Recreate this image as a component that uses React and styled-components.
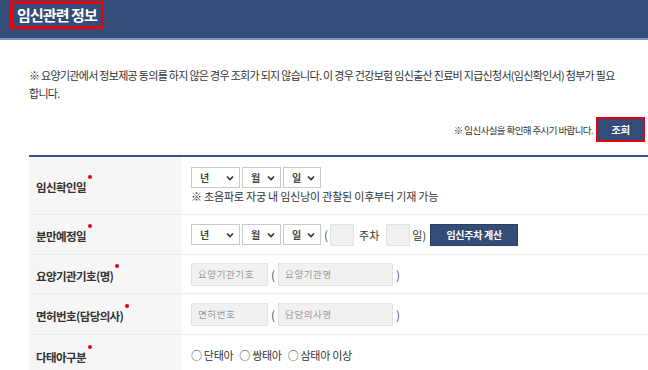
import React from 'react';
import styled, { createGlobalStyle } from 'styled-components';

const GlobalStyle = createGlobalStyle`
  body {
    margin: 0;
    background: #fff;
    font-family: "Noto Sans CJK KR", "Noto Sans", sans-serif;
    color: #333;
  }
`;

const Page = styled.div`
  width: 648px;
  height: 370px;
  overflow: hidden;
`;

const Header = styled.div`
  height: 40px;
  box-sizing: border-box;
  background: #344c78;
  border-bottom: 2px solid #8494b6;
  padding: 1px 0 0 10px;
`;

const Title = styled.h2`
  display: inline-block;
  margin: 0;
  padding: 2px 4px;
  border: 3px solid #e8000b;
  color: #fff;
  font-size: 15px;
  line-height: 18px;
  font-weight: 700;
  letter-spacing: -0.9px;
`;

const Body = styled.div`
  padding: 26px 0 0 29px;
`;

const Notice = styled.p`
  margin: 0;
  width: 600px;
  font-size: 11px;
  line-height: 18px;
  letter-spacing: -0.7px;
  word-break: keep-all;
  color: #333;
`;

const CheckRow = styled.div`
  display: flex;
  justify-content: flex-end;
  align-items: center;
  gap: 3px;
  margin-top: 15px;
  padding-right: 3px;
`;

const CheckNote = styled.span`
  font-size: 9.5px;
  letter-spacing: -0.6px;
  color: #333;
`;

const NavyButton = styled.button`
  font-family: inherit;
  background: #344c78;
  color: #fff;
  font-weight: 700;
  font-size: ${p => p.$small ? '10px' : '10.5px'};
  letter-spacing: -0.3px;
  border: ${p => p.$marked ? '2px solid #e8000b' : '1px solid #2b3f66'};
  width: ${p => p.$w}px;
  height: ${p => p.$h}px;
  margin-left: ${p => p.$ml || 0}px;
  padding: 0;
  cursor: pointer;
`;

const Table = styled.div`
  margin-top: 13px;
  border-top: 2px solid #3a5282;
`;

const Row = styled.div`
  display: grid;
  grid-template-columns: 153px 1fr;
  border-bottom: 1px solid #ececec;
  min-height: ${p => p.$h}px;
`;

const Label = styled.div`
  background: #f6f6f6;
  display: flex;
  align-items: center;
  padding: 3px 0 0 7px;
  font-size: 11.5px;
  font-weight: 700;
  letter-spacing: -0.6px;
  color: #333;
`;

const Dot = styled.span`
  width: 4px;
  height: 4px;
  border-radius: 50%;
  background: #e8000b;
  margin: 0 0 20px 2px;
`;

const Cell = styled.div`
  display: flex;
  flex-direction: column;
  justify-content: center;
  padding-left: 9px;
  gap: 1px;
`;

const Line = styled.div`
  display: flex;
  align-items: center;
  gap: 2px;
  font-size: 11px;
  color: #333;
`;

const Unit = styled.span`
  margin: ${p => p.$m || '0'};
`;

const SelectBox = styled.div`
  width: ${p => p.$w}px;
  height: 21px;
  box-sizing: border-box;
  border: 1px solid #c9c9c9;
  background: #fff;
  display: flex;
  align-items: center;
  justify-content: space-between;
  padding: 0 5px 0 8px;
  font-size: 10px;
  font-weight: 700;
  color: #444;
`;

const Hint = styled.div`
  font-size: 11px;
  letter-spacing: -0.2px;
  color: #333;
  line-height: 15px;
`;

const Field = styled.div`
  width: ${p => p.$w}px;
  height: ${p => p.$h || 23}px;
  box-sizing: border-box;
  background: #f1f1f1;
  border: 1px solid #e3e3e3;
  display: flex;
  align-items: center;
  padding-left: 6px;
  font-size: 9.5px;
  letter-spacing: 0.6px;
  color: #9a9a9a;
`;

const Paren = styled.span`
  font-size: 12px;
  color: #555;
  margin: ${p => p.$m || '0 1px'};
`;

const Radios = styled.div`
  display: flex;
  gap: 6px;
  font-size: 11px;
  letter-spacing: -0.3px;
  color: #333;
`;

const Chevron = () => (
  <svg width="8" height="6" viewBox="0 0 8 6">
    <path d="M1 1.5 L4 4.5 L7 1.5" fill="none" stroke="#333" strokeWidth="1.6" />
  </svg>
);

const DateSelects = () => (
  <>
    <SelectBox $w={49}>년<Chevron /></SelectBox>
    <SelectBox $w={39}>월<Chevron /></SelectBox>
    <SelectBox $w={38}>일<Chevron /></SelectBox>
  </>
);

const FieldLabel = ({ children }) => (
  <Label>
    {children}
    <Dot />
  </Label>
);

export default function App() {
  return (
    <Page>
      <GlobalStyle />
      <Header>
        <Title>임신관련 정보</Title>
      </Header>
      <Body>
        <Notice>
          ※ 요양기관에서 정보제공 동의를 하지 않은 경우 조회가 되지 않습니다. 이 경우 건강보험 임신출산 진료비 지급신청서(임신확인서) 첨부가 필요 합니다.
        </Notice>
        <CheckRow>
          <CheckNote>※ 임신사실을 확인해 주시기 바랍니다.</CheckNote>
          <NavyButton $marked $w={49} $h={25}>조회</NavyButton>
        </CheckRow>
        <Table>
          <Row $h={57}>
            <FieldLabel>임신확인일</FieldLabel>
            <Cell>
              <Line><DateSelects /></Line>
              <Hint>※ 초음파로 자궁 내 임신낭이 관찰된 이후부터 기재 가능</Hint>
            </Cell>
          </Row>
          <Row $h={39}>
            <FieldLabel>분만예정일</FieldLabel>
            <Cell>
              <Line>
                <DateSelects />
                <Paren $m="0 0 0 1px">(</Paren>
                <Field $w={24} $h={22} />
                <Unit $m="0 5px 0 3px">주차</Unit>
                <Field $w={24} $h={22} />
                <Unit>일)</Unit>
                <NavyButton $small $w={88} $h={22} $ml={2}>임신주차 계산</NavyButton>
              </Line>
            </Cell>
          </Row>
          <Row $h={38}>
            <FieldLabel>요양기관기호(명)</FieldLabel>
            <Cell>
              <Line>
                <Field $w={77}>요양기관기호</Field>
                <Paren>(</Paren>
                <Field $w={115}>요양기관명</Field>
                <Paren>)</Paren>
              </Line>
            </Cell>
          </Row>
          <Row $h={40}>
            <FieldLabel>면허번호(담당의사)</FieldLabel>
            <Cell>
              <Line>
                <Field $w={77}>면허번호</Field>
                <Paren>(</Paren>
                <Field $w={115}>담당의사명</Field>
                <Paren>)</Paren>
              </Line>
            </Cell>
          </Row>
          <Row $h={40}>
            <FieldLabel>다태아구분</FieldLabel>
            <Cell>
              <Radios>
                <span>○ 단태아</span>
                <span>○ 쌍태아</span>
                <span>○ 삼태아 이상</span>
              </Radios>
            </Cell>
          </Row>
        </Table>
      </Body>
    </Page>
  );
}
